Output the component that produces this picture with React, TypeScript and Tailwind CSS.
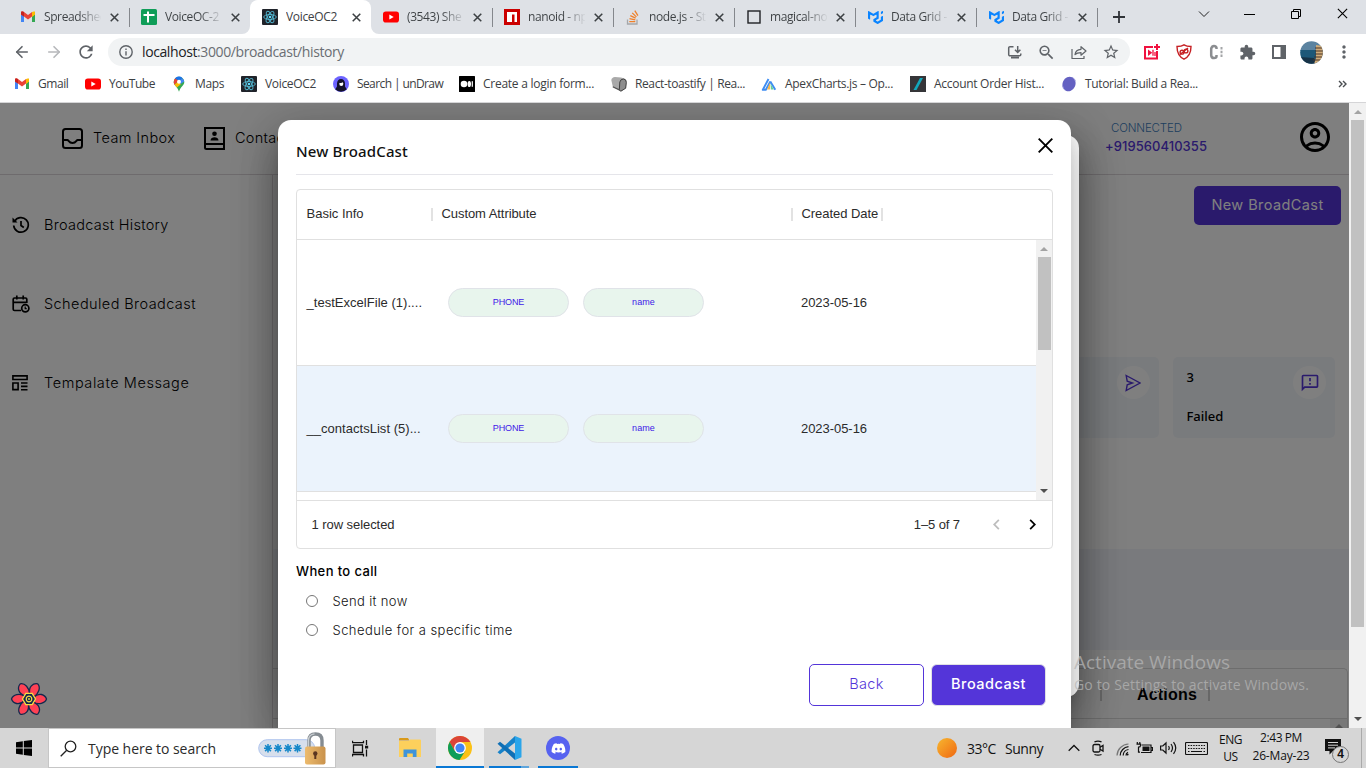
import type { ReactNode } from "react";
import {
  MdOutlineAccountCircle,
  MdOutlineFeedback,
  MdZoomOut,
  MdStarBorder,
  MdExtension,
  MdMoreVert,
  MdKeyboardArrowLeft,
  MdKeyboardArrowRight,
  MdRefresh,
} from "react-icons/md";
import { FaDiscord } from "react-icons/fa";
import { SiMui } from "react-icons/si";
import { ArrowLeft, ArrowRight } from "lucide-react";

/* ---------- brand marks ---------- */

const Gmail = () => (
  <svg width="16" height="16" viewBox="0 0 16 16">
    <path d="M1 3.6V13h3V7z" fill="#4285f4" />
    <path d="M15 3.6V13h-3V7z" fill="#34a853" />
    <path d="M12 3.8l3-1.2v3L12 8z" fill="#fbbc04" />
    <path d="M1 3.6C1 2 2.800 1.900 4 3l4 3.100L12 3v4.600l-4 3-4-3-3-2.200z" fill="#ea4335" />
    <path d="M1 3.600c0-1.300 1.500-1.600 3-.600v4.600L1 5.400z" fill="#c5221f" />
    <path d="M15 3.600c0-1.300-1.500-1.600-3-.600v4.600l3-2.200z" fill="#fbbc04" />
  </svg>
);

const YouTube = () => (
  <svg width="16" height="16" viewBox="0 0 16 16">
    <rect x="0" y="2.500" width="16" height="11" rx="2.800" fill="#f00" />
    <path d="M6.300 5.500v5L10.700 8z" fill="#fff" />
  </svg>
);

const ReactTile = () => (
  <svg width="16" height="16" viewBox="0 0 16 16">
    <rect width="16" height="16" rx="1" fill="#20232a" />
    <g fill="none" stroke="#53b9d3" strokeWidth=".9">
      <ellipse cx="8" cy="8" rx="6.300" ry="2.500" />
      <ellipse cx="8" cy="8" rx="6.300" ry="2.500" transform="rotate(60 8 8)" />
      <ellipse cx="8" cy="8" rx="6.300" ry="2.500" transform="rotate(120 8 8)" />
    </g>
    <circle cx="8" cy="8" r="1.300" fill="#61dafb" />
  </svg>
);

const Sheet = () => (
  <svg width="16" height="16" viewBox="0 0 16 16">
    <rect width="16" height="16" rx="1.500" fill="#0f9d58" />
    <path d="M2.500 6h11M7 2.500v11" stroke="#fff" strokeWidth="2" />
  </svg>
);

const Npm = () => (
  <svg width="16" height="16" viewBox="0 0 16 16">
    <rect width="16" height="16" fill="#cb0000" />
    <path d="M3 3h10v10h-2.500V5.500H8V13H3z" fill="#fff" />
  </svg>
);

const Square = () => (
  <svg width="16" height="16" viewBox="0 0 16 16">
    <rect x="2" y="2" width="12" height="12" fill="none" stroke="#202124" strokeWidth="1.400" />
  </svg>
);

const Stack = () => (
  <svg width="16" height="16" viewBox="0 0 16 16" fill="none">
    <path d="M2.500 10.500V15h9.500v-4.500" stroke="#a5a7aa" strokeWidth="1.300" />
    <path d="M4.300 12.700h6M4.500 9.700l5.800 1.200M5.300 6.700l5.300 2.500M7.200 3.900l4.200 4M9.800 1.700l3.100 5" stroke="#f08029" strokeWidth="1.300" />
  </svg>
);

const MapsPin = () => (
  <svg width="16" height="16" viewBox="0 0 16 16">
    <path d="M2.700 6a5.300 5.300 0 0 1 10.600 0c0 3.500-3.800 4.500-5.300 9.700C6.500 10.500 2.700 9.500 2.700 6z" fill="#34a853" />
    <path d="M2.800 6.500C2.800 4.500 3.500 3 4.500 2l3 2.500-4 4.500z" fill="#ea4335" />
    <path d="M3.500 8.800L7 5.500l3 2.500-4 3.600z" fill="#fbbc04" />
    <path d="M4 2.500C6 0 9.500 0 11.300 2L8.500 5z" fill="#1a73e8" />
    <path d="M11.200 1.900q1.800 1.500 2 3.600L9.500 8 8.500 5z" fill="#4285f4" />
    <circle cx="8" cy="5.800" r="2" fill="#fff" />
  </svg>
);

const UnDraw = () => (
  <svg width="16" height="16" viewBox="0 0 16 16">
    <circle cx="8" cy="8" r="8" fill="#6c63ff" />
    <path d="M4 7.500a4 4.500 0 0 1 8 0v3l1.800 2.700a8 8 0 0 1-11.600 0L4 10.500z" fill="#14122b" />
    <ellipse cx="8.300" cy="7.800" rx="2" ry="2.200" fill="#fff" />
    <path d="M5.500 6.500Q8 8 10.500 5.800L9 4.500H6.500z" fill="#14122b" />
  </svg>
);

const Medium = () => (
  <svg width="16" height="16" viewBox="0 0 16 16">
    <rect width="16" height="16" rx=".5" fill="#000" />
    <circle cx="5" cy="8" r="3.300" fill="#fff" />
    <ellipse cx="10.300" cy="8" rx="1.700" ry="3.100" fill="#fff" />
    <rect x="12.700" y="5.200" width="1.200" height="5.600" fill="#fff" />
  </svg>
);

const Toast = () => (
  <svg width="16" height="16" viewBox="0 0 16 16">
    <path d="M.3 4Q.8 1.300 4 1l6 .4 3.500 1.200q2 1 2 3.500l-.6 6-4.500 3.200L2 11.500z" fill="#a9a9a9" />
    <path d="M8.800 6Q9.500 3 12.500 3q3 .3 2.800 3.500l-.6 5.700-4.800 3-1.600-1z" fill="#8d8d8d" stroke="#383838" strokeWidth=".9" />
    <path d="M1.800 10.800l7 3.300" stroke="#555" strokeWidth="1.200" />
  </svg>
);

const Apex = () => (
  <svg width="16" height="16" viewBox="0 0 16 16">
    <path d="M7.500 3L1.800 13.800h3L9.300 5.500M9.300 5.500l5 8.300" fill="none" stroke="#3f8df2" strokeWidth="1.900" strokeLinejoin="round" />
    <path d="M9 6.500l-3 7h3.200z" fill="#f8b84e" />
    <path d="M9.500 7.500l3.300 6H10z" fill="#64cf9b" />
  </svg>
);

const Account = () => (
  <svg width="16" height="16" viewBox="0 0 16 16">
    <rect width="16" height="16" fill="#353538" />
    <path d="M10 2h3L6.500 14h-3z" fill="#12a8bc" />
  </svg>
);

const Tutorial = () => (
  <svg width="16" height="16" viewBox="0 0 16 16">
    <ellipse cx="8" cy="8" rx="6.400" ry="7.400" transform="rotate(25 8 8)" fill="#6461c2" />
    <path d="M1.500 9.500q.5 4 3 5M11 1.200q3 1.500 3.500 4" fill="none" stroke="#9b99dd" strokeWidth=".9" />
  </svg>
);

const Mui = () => <SiMui size={15} color="#0a84ff" />;

/* ---------- browser ---------- */

type Tab = { icon: ReactNode; text: string; active?: boolean; sep?: boolean };
const tabs: Tab[] = [
  { icon: <Gmail />, text: "Spreadshee", sep: true },
  { icon: <Sheet />, text: "VoiceOC-2" },
  { icon: <ReactTile />, text: "VoiceOC2", active: true },
  { icon: <YouTube />, text: "(3543) She", sep: true },
  { icon: <Npm />, text: "nanoid - np", sep: true },
  { icon: <Stack />, text: "node.js - St", sep: true },
  { icon: <Square />, text: "magical-no", sep: true },
  { icon: <Mui />, text: "Data Grid -", sep: true },
  { icon: <Mui />, text: "Data Grid -", sep: true },
];

const Cross = ({ size = 9, w = 1.7 }: { size?: number; w?: number }) => (
  <svg width={size} height={size} viewBox="0 0 10 10" fill="none" stroke="currentColor" strokeWidth={w}>
    <path d="M.8.800l8.400 8.400M9.200.800L.8 9.200" />
  </svg>
);

const TabStrip = () => (
  <div className="flex h-[34px] shrink-0 bg-[#dee1e6] pl-2 text-[#3c4043]">
    {tabs.map((t, i) => (
      <div
        key={i}
        className={
          t.active
            ? "relative flex h-[34px] w-[121px] shrink-0 items-center rounded-t-lg bg-white pl-[12px]"
            : "relative flex h-[34px] w-[121px] shrink-0 items-center pl-[12px]"
        }
      >
        {t.active && (
          <>
            <svg className="absolute bottom-0 -left-2" width="8" height="8" viewBox="0 0 8 8">
              <path d="M8 0v8H0a8 8 0 0 0 8-8z" fill="#fff" />
            </svg>
            <svg className="absolute -right-2 bottom-0" width="8" height="8" viewBox="0 0 8 8">
              <path d="M0 0v8h8a8 8 0 0 1-8-8z" fill="#fff" />
            </svg>
          </>
        )}
        <span className="flex w-4 justify-center">{t.icon}</span>
        <span
          className={
            t.active
              ? "ml-2 w-[57px] overflow-hidden text-[12px] tracking-[-0.33px] whitespace-nowrap"
              : "ml-2 w-[57px] overflow-hidden bg-linear-to-r from-[#3c4043] from-60% to-[#3c4043]/5 bg-clip-text text-[12px] tracking-[-0.4px] whitespace-nowrap text-transparent"
          }
        >
          {t.text}
        </span>
        <span className="ml-[8.500px]">
          <Cross />
        </span>
        {t.sep && <span className="absolute top-[8px] right-[-1px] h-[19px] w-px bg-[#84878c]" />}
      </div>
    ))}
    <svg className="mt-[11px] ml-[16px]" width="12" height="12" viewBox="0 0 12 12">
      <path d="M6 0v12M0 6h12" stroke="#303338" strokeWidth="1.800" />
    </svg>
    <div className="mt-[8px] mr-[18px] ml-auto flex gap-[35px] text-black">
      <svg width="12" height="12" viewBox="0 0 12 12" fill="none" stroke="#222" className="mr-[-1px] ml-[1px]">
        <path d="M1 3.500l5 5 5-5" />
      </svg>
      <svg width="11" height="12" viewBox="0 0 11 12">
        <path d="M0 6.500h11" stroke="#000" />
      </svg>
      <svg width="12" height="12" viewBox="0 0 12 12" fill="none" stroke="#000">
        <path d="M3.500 3V1.500h7v7H9M1.500 3.500h7v7h-7z" />
      </svg>
      <Cross size={11} w={1} />
    </div>
  </div>
);

const Toolbar = () => (
  <div className="flex h-[36px] shrink-0 items-center bg-white pl-[13px] text-[#5f6368]">
    <ArrowLeft size={18} strokeWidth={2.2} />
    <ArrowRight size={18} strokeWidth={2.2} className="ml-[14px] text-[#b6b8bb]" />
    <MdRefresh size={20} className="ml-[13px]" />
    <div className="ml-[12px] flex h-[28px] w-[1022px] items-center rounded-full bg-[#f1f3f4] pl-[11px]">
      <svg width="14" height="14" viewBox="0 0 14 14" fill="none" stroke="#5f6368" strokeWidth="1.400">
        <circle cx="7" cy="7" r="6.200" />
        <path d="M7 6.200v4.300M7 3.600v1.500" />
      </svg>
      <span className="ml-[9px] pb-[2px] text-[14px] tracking-[-0.4px] whitespace-nowrap text-[#6a6e73]">
        <span className="text-[#202124]">localhost</span>:3000/broadcast/history
      </span>
      <div className="mr-[10px] ml-auto flex items-center gap-[15px]">
        <svg width="16" height="16" viewBox="0 0 16 16" fill="none" stroke="#5f6368" strokeWidth="1.500" className="mr-[-1px]">
          <path d="M6.500 2.700H3a1.300 1.300 0 0 0-1.300 1.300v6.500A1.300 1.300 0 0 0 3 11.800h9.500a1.300 1.300 0 0 0 1.300-1.300V9.500M10.700 2v6M8 5.700l2.700 2.700 2.700-2.700" />
          <path d="M4 13.500h8" strokeWidth="2" />
        </svg>
        <MdZoomOut size={19} />
        <svg width="16" height="16" viewBox="0 0 16 16" fill="none" stroke="#5f6368" strokeWidth="1.200">
          <path d="M1 5v9.500h12V12M4 10.500c.500-3.500 2.500-5 6-5.200V2.700l5 4.300-5 4.200V8.600C7 8.600 5.500 9 4 10.500z" strokeLinejoin="round" />
        </svg>
        <MdStarBorder size={18} />
      </div>
    </div>
    <svg className="ml-[13px]" width="18" height="18" viewBox="0 0 18 18" fill="none" stroke="#f0123f" strokeWidth="2">
      <path d="M10 4H2v11.500h12V8M14 1v6M11 4h6" />
      <path d="M5 6.500v6.500L9.300 9.700z" fill="#f0123f" stroke="none" />
      <path d="M10 6.800v6M12 9v4" strokeWidth="1.300" />
    </svg>
    <svg className="ml-[15px]" width="16" height="16" viewBox="0 0 16 16" fill="none" stroke="#c62024" strokeWidth="1.400">
      <path d="M8 .8c2.500 1.700 4.500 1.700 7 1.700 0 5.500-1.500 10-7 12.700C2.500 12.500 1 8 1 2.500c2.500 0 4.500 0 7-1.700z" />
      <circle cx="6" cy="8.200" r="1.900" />
      <circle cx="10" cy="7" r="1.900" />
      <path d="M4 10.500L12 4" />
    </svg>
    <svg className="ml-[17px]" width="15" height="16" viewBox="0 0 15 16" fill="none" stroke="#8b8d90" strokeWidth="2.500">
      <path d="M7.500 5V3.800Q7 2 5 2T2.200 4.500v7Q2.500 14 5 14t2.500-1.800V11" />
      <path d="M12.500 3v2.500M12.500 6.800v2.400M12.500 10.500V13" stroke="#a3a5a7" strokeWidth="2" />
    </svg>
    <MdExtension size={17} className="ml-[15px]" />
    <svg className="ml-[16px]" width="14" height="14" viewBox="0 0 14 14">
      <path d="M0 0h14v14H0zM2 2v10h6.500V2z" fill="#5f6368" fillRule="evenodd" />
    </svg>
    <svg className="ml-[14px]" width="23" height="23" viewBox="0 0 23 23">
      <defs>
        <clipPath id="avatar">
          <circle cx="11.500" cy="11.500" r="11.300" />
        </clipPath>
      </defs>
      <g clipPath="url(#avatar)">
        <path d="M0 0h23v10H0z" fill="#5b83a0" />
        <path d="M0 9h23v14H0z" fill="#1d5878" />
        <path d="M0 16l14 1 3 6H0z" fill="#173347" />
        <path d="M16 4l7 1v16l-9 2 2-6z" fill="#d1ac79" />
        <path d="M15 7h8M15 10h8M15 13h8M14 16h8M13 19h8" stroke="#4a3529" strokeWidth="1.100" />
      </g>
    </svg>
    <MdMoreVert size={20} className="ml-[11px]" />
  </div>
);

const Bookmark = ({ icon, className, children }: { icon: ReactNode; className: string; children: ReactNode }) => (
  <div className={"flex shrink-0 items-center gap-2 text-[12px] whitespace-nowrap " + className}>
    {icon}
    <span>{children}</span>
  </div>
);

const Bookmarks = () => (
  <div className="flex h-[32px] shrink-0 items-center bg-white pb-[4px] pl-[14px] text-[#3c4043]">
    <Bookmark icon={<Gmail />} className="w-[71px] tracking-[-0.45px]">Gmail</Bookmark>
    <Bookmark icon={<YouTube />} className="w-[86px] tracking-[-0.48px]">YouTube</Bookmark>
    <Bookmark icon={<MapsPin />} className="w-[70px] tracking-[-0.38px]">Maps</Bookmark>
    <Bookmark icon={<ReactTile />} className="w-[92px] tracking-[-0.33px]">VoiceOC2</Bookmark>
    <Bookmark icon={<UnDraw />} className="w-[126px] tracking-[-0.6px]">Search | unDraw</Bookmark>
    <Bookmark icon={<Medium />} className="w-[152px] tracking-[-0.26px]">Create a login form...</Bookmark>
    <Bookmark icon={<Toast />} className="w-[150px] tracking-[-0.39px]">React-toastify | Rea...</Bookmark>
    <Bookmark icon={<Apex />} className="w-[149px] tracking-[-0.32px]">ApexCharts.js – Op...</Bookmark>
    <Bookmark icon={<Account />} className="w-[151px] tracking-[-0.29px]">Account Order Hist...</Bookmark>
    <Bookmark icon={<Tutorial />} className="w-[140px] tracking-[-0.34px]">Tutorial: Build a Rea...</Bookmark>
    <svg className="mr-[19px] ml-auto" width="9" height="8" viewBox="0 0 9 8" fill="none" stroke="#4a4d51" strokeWidth="1.400">
      <path d="M1 1l3 3-3 3M5 1l3 3-3 3" />
    </svg>
  </div>
);

/* ---------- app page ---------- */

const InboxIcon = () => (
  <svg width="21" height="21" viewBox="0 0 21 21" fill="none" stroke="#000" strokeWidth="2">
    <rect x="1" y="1" width="19" height="19" rx="2.500" />
    <path d="M1 12h4.500c1 0 1.500 3 5 3s4-3 5-3H20" />
  </svg>
);

const ContactsIcon = () => (
  <svg width="21" height="23" viewBox="0 0 21 23">
    <path d="M1 1h19v21H2.500A1.500 1.500 0 0 1 1 20.500zM1 17h19" fill="none" stroke="#000" strokeWidth="2" />
    <circle cx="10.500" cy="6.800" r="2.300" fill="#000" />
    <path d="M6.500 13.500c0-4.300 8-4.300 8 0z" fill="#000" />
  </svg>
);

const HistoryIcon = () => (
  <svg width="18" height="18" viewBox="0 0 18 18" fill="none" stroke="#000" strokeWidth="1.700">
    <path d="M2.500 5.500A7.300 7.300 0 1 1 1.700 9.500M9 5v4.500l2.800 2" />
    <path d="M.5 1.500v5h5z" fill="#000" stroke="none" />
  </svg>
);

const ScheduleIcon = () => (
  <svg width="18" height="18" viewBox="0 0 18 18" fill="none" stroke="#000" strokeWidth="1.700">
    <path d="M9 15.500H2.500A1.300 1.300 0 0 1 1.200 14.200V4.300A1.300 1.300 0 0 1 2.500 3h11a1.300 1.300 0 0 1 1.300 1.300V8M1 7.300h13.500M4.800.5v4M11.200.5v4" />
    <circle cx="13.300" cy="13.300" r="3.600" />
    <path d="M13.200 11.500v2.200h1.500" strokeWidth="1.200" />
  </svg>
);

const TemplateIcon = () => (
  <svg width="16" height="16" viewBox="0 0 16 16" fill="none" stroke="#000" strokeWidth="1.600">
    <path d="M.9.900h14.200v3.600H.9zM.9 8h5.200v6.600H.9zM9 8h6.500M9 11.400h6.500M9 14.700h6.500" />
  </svg>
);

const SideItem = ({ icon, children }: { icon: ReactNode; children: ReactNode }) => (
  <div className="flex h-[79px] items-center text-[14.500px] font-[350] whitespace-nowrap">
    <span className="flex w-[32px]">{icon}</span>
    {children}
  </div>
);

const ScrollArrow = ({ down, color }: { down?: boolean; color: string }) => (
  <svg width="8" height="4" viewBox="0 0 8 4" className="shrink-0">
    <path d={down ? "M0 0h8L4 4z" : "M0 4h8L4 0z"} fill={color} />
  </svg>
);

const StatCard = ({ value, label, icon }: { value?: string; label?: string; icon: ReactNode }) => (
  <div className="flex h-[81px] w-[162px] justify-between rounded-[5px] bg-[#f3f7fb] pt-[9px] pr-[9px] pl-[13.500px] font-['Noto_Sans'] text-[13px] font-medium">
    <div className="flex flex-col gap-[21px] pt-[2px] leading-[18px]">
      <span>{value}</span>
      <span>{label}</span>
    </div>
    <span className="flex size-[33px] items-center justify-center rounded-full bg-white text-[#5435d9]">{icon}</span>
  </div>
);

const AppPage = () => (
  <div className="flex h-[625px] w-[1349px] flex-col bg-white font-['Inter'] text-black">
    <header className="flex h-[72px] shrink-0 items-center border-b border-[#dcd6da] pr-[16px] pl-[62px] text-[14.500px] font-[350]">
      <InboxIcon />
      <span className="ml-[10px] w-[111px] pb-[2px] tracking-[0.4px] whitespace-nowrap">Team Inbox</span>
      <ContactsIcon />
      <span className="ml-[10px] pb-[2px] tracking-[0.3px]">Contacts</span>
      <div className="mr-[90px] mb-[4px] ml-auto flex flex-col items-start text-[#5435d9]">
        <span className="pl-[6px] text-[11.500px] leading-[18px] tracking-[-0.15px] text-[#3d7dbd]">CONNECTED</span>
        <span className="text-[13px] leading-[18px] font-medium tracking-[0.06px]">+919560410355</span>
      </div>
      <MdOutlineAccountCircle size={36} className="mb-[3px]" />
    </header>
    <div className="flex min-h-0 flex-1">
      <nav className="flex w-[273px] shrink-0 flex-col border-r border-[#dcd6da] pt-[10px] pl-[12px]">
        <SideItem icon={<HistoryIcon />}>
          <span className="tracking-[0.28px]">Broadcast History</span>
        </SideItem>
        <SideItem icon={<ScheduleIcon />}>
          <span className="tracking-[0.42px]">Scheduled Broadcast</span>
        </SideItem>
        <SideItem icon={<TemplateIcon />}>
          <span className="tracking-[0.58px]">Tempalate Message</span>
        </SideItem>
      </nav>
      <main className="flex min-w-0 flex-1 flex-col pt-[11px]">
        <button className="mr-[8px] flex h-[39px] w-[147px] shrink-0 items-center justify-center self-end rounded-[5px] bg-[#5435d9] pb-[2px] text-[14.500px] tracking-[0.42px] text-white">
          New BroadCast
        </button>
        <div className="mt-[132px] flex shrink-0 justify-end gap-[14px] pr-[14px]">
          <StatCard
            icon={
              <svg width="16" height="18" viewBox="0 0 16 18" fill="none" stroke="currentColor" strokeWidth="1.400" className="ml-[-2px]">
                <path d="M1.200 1.500L15 9 1.200 16.500l1-5.700L7.500 9 2.200 7.200z" />
              </svg>
            }
          />
          <StatCard value="3" label="Failed" icon={<MdOutlineFeedback size={20} />} />
        </div>
        <div className="mt-[111px] h-[101px] shrink-0 bg-[#f3f5fa]" />
        <div className="mt-[18px] mr-px flex min-h-0 flex-1 flex-col rounded-tr-[5px] border-t border-r border-[#dadada]">
          <div className="flex h-[50px] shrink-0 items-center justify-end border-b border-[#dadada] pr-[137px] font-['Liberation_Sans'] text-[16px] font-bold">
            <span className="h-[14px] w-[2px] bg-[#cfcfcf]" />
            <span className="mt-[2px] mr-[11px] ml-[35px] tracking-[0.19px]">Actions</span>
            <span className="h-[14px] w-[2px] bg-[#cfcfcf]" />
          </div>
          <div className="flex h-[9px] w-[17px] items-end justify-center self-end bg-[#f1f1f1]">
            <ScrollArrow color="#a3a3a3" />
          </div>
        </div>
      </main>
    </div>
  </div>
);

/* ---------- dialog ---------- */

const Pill = ({ children }: { children: ReactNode }) => (
  <span className="flex h-[29px] w-[121px] items-center justify-center rounded-full border border-[#e0e3e8] bg-[#e8f5ed] text-[9px] text-[#4018e8]">
    {children}
  </span>
);

const Row = ({ name, selected }: { name: string; selected?: boolean }) => (
  <div
    className={
      selected
        ? "flex h-[126px] shrink-0 items-center border-b border-[#e0e0e0] bg-[#ebf3fc]"
        : "flex h-[126px] shrink-0 items-center border-b border-[#e0e0e0]"
    }
  >
    <span className="w-[151px] pl-[9.500px] tracking-[0.03px] whitespace-nowrap">{name}</span>
    <div className="flex w-[353px] gap-[14px]">
      <Pill>
        <span className="tracking-[-0.15px]">PHONE</span>
      </Pill>
      <Pill>
        <span className="tracking-[0.12px]">name</span>
      </Pill>
    </div>
    <span className="tracking-[-0.05px]">2023-05-16</span>
  </div>
);

const Sep = () => <span className="mt-[2px] h-[13px] w-[2px] bg-[#e2e2e2]" />;

const DataGrid = () => (
  <div className="mt-[14px] flex h-[360px] shrink-0 flex-col rounded-[4px] border border-[#e0e0e0] font-['Liberation_Sans'] text-[13px] text-[#2b2b2b]">
    <div className="flex h-[50px] shrink-0 items-center border-b border-[#e0e0e0] pb-[2px] pl-[9.500px] whitespace-nowrap">
      <span className="w-[124px]">Basic Info</span>
      <Sep />
      <span className="ml-[9px] w-[349px] tracking-[-0.07px]">Custom Attribute</span>
      <Sep />
      <span className="ml-[9px] w-[79px] tracking-[-0.06px]">Created Date</span>
      <Sep />
    </div>
    <div className="flex h-[260px] shrink-0">
      <div className="flex w-[739px] flex-col overflow-hidden">
        <Row name="_testExcelFile (1)...." />
        <Row name="__contactsList (5)..." selected />
      </div>
      <div className="flex flex-1 flex-col items-center bg-[#f1f1f1]">
        <div className="flex h-[17px] items-center">
          <ScrollArrow color="#a3a3a3" />
        </div>
        <div className="h-[93px] w-[13px] bg-[#c1c1c1]" />
        <div className="mt-auto flex h-[18px] items-center">
          <ScrollArrow down color="#505050" />
        </div>
      </div>
    </div>
    <div className="flex flex-1 items-center border-t border-[#e0e0e0] pl-[14.500px]">
      <span className="tracking-[-0.06px]">1 row selected</span>
      <span className="ml-auto tracking-[-0.1px]">1–5 of 7</span>
      <MdKeyboardArrowLeft size={21} className="ml-[26px] text-[#bdbdbd]" />
      <MdKeyboardArrowRight size={21} className="mr-[9px] ml-[15px] text-black" />
    </div>
  </div>
);

const Radio = ({ children }: { children: ReactNode }) => (
  <label className="flex h-[29px] items-center pl-[10px] text-[13px] font-[350] text-[#111]">
    <span className="mr-[14.500px] mb-[2px] size-[12px] rounded-full border border-[#767676] bg-white" />
    {children}
  </label>
);

const shadow =
  "shadow-[0_11px_15px_-7px_rgba(0,0,0,0.2),0_24px_38px_3px_rgba(0,0,0,0.14),0_9px_46px_8px_rgba(0,0,0,0.12)]";

const BroadcastDialog = () => (
  <section
    className={
      "absolute top-[17px] left-[278px] flex h-[640px] w-[793px] flex-col rounded-t-[13px] bg-white px-[18px] font-['Inter'] " + shadow
    }
  >
    <div className="flex h-[55px] shrink-0 justify-between border-b border-[#e5e5ea]">
      <h2 className="pt-[20px] font-['Noto_Sans'] text-[15px] leading-[22px] font-medium tracking-[0.15px] text-[#111]">New BroadCast</h2>
      <svg className="mt-[18px]" width="15" height="15" viewBox="0 0 15 15" fill="none" stroke="#000" strokeWidth="1.900">
        <path d="M.7.700l13.600 13.600M14.300.700L.7 14.300" />
      </svg>
    </div>
    <DataGrid />
    <div className="mt-[12px] h-[20px] text-[13px] leading-[20px] font-medium tracking-[0.38px]">When to call</div>
    <div className="mt-[6px] flex flex-col">
      <Radio>
        <span className="tracking-[0.36px]">Send it now</span>
      </Radio>
      <Radio>
        <span className="tracking-[0.44px]">Schedule for a specific time</span>
      </Radio>
    </div>
    <div className="mt-[19px] mr-[7px] flex justify-end gap-[7px] text-[14.500px]">
      <button className="h-[42px] w-[115px] rounded-[5px] border border-[#5435d9] pb-[3px] font-[350] tracking-[0.3px] text-[#5435d9]">Back</button>
      <button className="h-[42px] w-[115px] rounded-[6px] border border-[#e0e0e4] bg-[#5435d9] pb-[3px] font-medium tracking-[0.48px] text-white">
        Broadcast
      </button>
    </div>
  </section>
);

const QueryFlower = () => (
  <svg className="absolute top-[577px] left-[10px]" width="38" height="38" viewBox="-19 -19 38 38">
    {[30, 90, 150, 210, 270, 330].map((a) => (
      <path
        key={a}
        d="M-1.500-4.500C-7-10-4.500-16 0-17.500c4.500 1.500 6 8 3 13.500z"
        transform={`rotate(${a})`}
        fill="#ff4154"
        stroke="#13294d"
        strokeWidth="1.300"
        strokeLinejoin="round"
      />
    ))}
    <path d="M-3.200-5.700h6.400L6.500 0 3.200 5.700h-6.400L-6.500 0z" fill="#13294d" stroke="#f5dd45" strokeWidth="1.300" />
    <circle r="2.800" fill="none" stroke="#f5dd45" strokeWidth="1.200" />
    <circle r=".9" fill="#f5dd45" />
  </svg>
);

/* ---------- taskbar ---------- */

const ChromeLogo = () => (
  <svg width="24" height="24" viewBox="0 0 24 24">
    <circle cx="12" cy="12" r="12" fill="#fbc116" />
    <path d="M12 6h10.400A12 12 0 0 0 1.600 6l5.200 9z" fill="#db4437" />
    <path d="M1.600 6a12 12 0 0 0 9.900 18l5.700-9-10.400 0z" fill="#0f9d58" />
    <circle cx="12" cy="12" r="5.900" fill="#fff" />
    <circle cx="12" cy="12" r="4.600" fill="#4285f4" />
  </svg>
);

const CodeLogo = () => (
  <svg width="25" height="24" viewBox="0 0 25 24">
    <path d="M18 0l6.500 2.700v18.600L18 24z" fill="#2aa5ea" />
    <path d="M18 0v6.500L3 18.300.5 16.200z" fill="#1782c9" />
    <path d="M18 24v-6.500L3 5.700.5 7.800z" fill="#0f6fb5" />
  </svg>
);

const AppButton = ({ active, className, line, children }: { active?: boolean; className: string; line?: ReactNode; children: ReactNode }) => (
  <div className={"flex h-[40px] shrink-0 flex-col items-center " + (active ? "bg-[#efefef] " : "") + className}>
    <span className="flex flex-1 items-center pt-[2px]">{children}</span>
    {line ?? <span className="h-[2px]" />}
  </div>
);

const Taskbar = () => (
  <footer className="flex h-[40px] shrink-0 items-center bg-[#d6d6d6] text-[14px] text-[#111]">
    <span className="flex w-[48px] justify-center">
      <svg width="16" height="16" viewBox="0 0 16 16">
        <path d="M0 2.200L6.800 1.300V7.500H0zM7.800 1.100L16 0v7.500H7.800zM0 8.500h6.800v6.200L0 13.800zM7.800 8.500H16V16l-8.200-1.100z" />
      </svg>
    </span>
    <div className="flex h-[40px] w-[288px] items-center border border-[#c6c6c6] bg-white pl-[11px]">
      <svg width="17" height="17" viewBox="0 0 17 17" fill="none" stroke="#222" strokeWidth="1.300">
        <circle cx="10.500" cy="6.500" r="5.300" />
        <path d="M6.700 10.300L.7 16.300" />
      </svg>
      <span className="ml-[11px] w-[170px] tracking-[-0.04px] text-[#2b2b2b]">Type here to search</span>
      <svg width="69" height="36" viewBox="0 0 69 36">
        <defs>
          <linearGradient id="lock" x1="0" x2="1">
            <stop offset="0" stopColor="#edbb6d" />
            <stop offset="1" stopColor="#c9924c" />
          </linearGradient>
        </defs>
        <rect x=".7" y="9.700" width="56" height="17" rx="8.500" fill="#d7dfec" stroke="#afc4ee" />
        <g stroke="#1688c9" strokeWidth="1.500">
          {[10, 20, 30, 39.5].map((x) => (
            <path key={x} d={`M${x} 14v8.500M${x - 4} 18.200h8M${x - 2.9} 15.300l5.800 5.800M${x + 2.9} 15.300l-5.800 5.800`} />
          ))}
        </g>
        <path d="M51 18V10.500q0-6.500 6.500-6.500T64 10.500V18" fill="none" stroke="#858c92" strokeWidth="3.400" />
        <path d="M50.500 17V10.500q0-6 6-6.700" fill="none" stroke="#c9ced2" strokeWidth="1.300" />
        <rect x="47" y="16.500" width="20.500" height="18" rx="2" fill="url(#lock)" />
        <circle cx="57.300" cy="23.500" r="2.200" fill="#5b3520" />
        <path d="M56.300 24h2v5h-2z" fill="#5b3520" />
      </svg>
    </div>
    <AppButton className="w-[48px]">
      <svg width="17" height="17" viewBox="0 0 17 17" fill="none" stroke="#111" strokeWidth="1.300">
        <path d="M.5.700v2h11V.700M1.500 5h9v7.500h-9zM.5 16.500v-2h11v2M14.500 0v5M14.500 9.500v7" />
        <path d="M13 5.700h3.200v2.800H13z" fill="#111" stroke="none" />
      </svg>
    </AppButton>
    <AppButton className="w-[52px]">
      <svg width="22" height="20" viewBox="0 0 22 20">
        <path d="M0 1q0-1 1-1h8l1.500 2.500H0z" fill="#d99a1a" />
        <path d="M0 3h10l1-1.500h10q1 0 1 1V19H0z" fill="#fdd05c" />
        <path d="M4.500 19v-7.500h13V19h-3.700v-3.500H8.200V19z" fill="#3f94da" />
      </svg>
    </AppButton>
    <AppButton active className="w-[48px]" line={<span className="h-[2px] w-full bg-[#0a78d4]" />}>
      <ChromeLogo />
    </AppButton>
    <AppButton
      className="w-[50px]"
      line={
        <span className="flex h-[2px] w-[40px]">
          <span className="w-[32px] bg-[#0a78d4]" />
          <span className="w-[8px] bg-[#5fa5dc]" />
        </span>
      }
    >
      <CodeLogo />
    </AppButton>
    <AppButton className="w-[48px]" line={<span className="h-[2px] w-[40px] bg-[#0a78d4]" />}>
      <span className="flex size-6 items-center justify-center rounded-full bg-[#5662f0] text-white">
        <FaDiscord size={15} />
      </span>
    </AppButton>

    <span className="ml-auto size-[20px] shrink-0 rounded-full bg-linear-to-br from-[#f6b62f] to-[#ee6510]" />
    <span className="ml-[10px] w-[38px] shrink-0 tracking-[-0.46px]">33°C</span>
    <span className="w-[63px] shrink-0 tracking-[-0.49px]">Sunny</span>
    <svg className="shrink-0" width="12" height="8" viewBox="0 0 12 8" fill="none" stroke="#111" strokeWidth="1.300">
      <path d="M.7 6.800L6 1.500l5.300 5.300" />
    </svg>
    <svg className="ml-[12px] shrink-0" width="12" height="16" viewBox="0 0 12 16" fill="none" stroke="#111" strokeWidth="1.300">
      <rect x="1" y="4.500" width="7" height="7.500" rx="1.500" />
      <path d="M8 7.300l3-1.800v5.500l-3-1.800M2.500 1.800q3.500-1.500 7 0M2.500 14.500q3.500 1.300 7 0" />
    </svg>
    <svg className="mt-[2px] ml-[12px] shrink-0" width="13" height="13" viewBox="0 0 13 13" fill="none" stroke="#111" strokeWidth="1.200">
      <path d="M10 12.500a3.500 3.500 0 0 1 2-3.300M7.200 12.500A6 6 0 0 1 12.500 6.500M4.200 12.500A9 9 0 0 1 12.500 3.700" />
      <path d="M1 12.500A12 12 0 0 1 12.500 1" stroke="#777" />
      <circle cx="11.500" cy="11.500" r="1.100" fill="#111" stroke="none" />
    </svg>
    <svg className="ml-[7px] shrink-0" width="17" height="12" viewBox="0 0 17 12" fill="none" stroke="#111" strokeWidth="1.200">
      <path d="M5.500 3h9.500v7.500H5M15.500 5.500h1v3h-1M1.300 0v2M3.800 0v2M.5 2.200h4v1.500q0 1.300-2 1.500v5H4" />
      <path d="M6.500 4.500h7v4.500h-7z" fill="#111" stroke="none" />
    </svg>
    <svg className="ml-[7px] shrink-0" width="17" height="14" viewBox="0 0 17 14" fill="none" stroke="#111" strokeWidth="1.200">
      <path d="M.6 5v4h2.200l3.200 3V2L2.800 5zM8.500 5q1.500 2 0 4M11 3q3 4 0 8M13.500 1.200q4.500 5.800 0 11.600" />
    </svg>
    <svg className="ml-[8px] shrink-0" width="23" height="13" viewBox="0 0 23 13" fill="none" stroke="#111" strokeWidth="1.100">
      <rect x=".5" y=".5" width="22" height="12" rx="1" />
      <path d="M3 3.500h17M3 6.500h17" strokeDasharray="1.500 1.100" />
      <path d="M3 9.500h1.500M6 9.500h11M18.500 9.500H20" />
    </svg>
    <div className="ml-[11px] flex w-[23px] shrink-0 flex-col items-center text-[12px] leading-[17px] tracking-[-0.48px]">
      <span>ENG</span>
      <span>US</span>
    </div>
    <div className="mb-[2px] ml-[9px] flex w-[60px] shrink-0 flex-col items-center text-[12px] leading-[18px] whitespace-nowrap">
      <span className="tracking-[-0.41px]">2:43 PM</span>
      <span className="tracking-[-0.18px]">26-May-23</span>
    </div>
    <div className="relative mt-[3px] ml-[14px] h-[26px] w-[24px] shrink-0">
      <svg width="17" height="17" viewBox="0 0 17 17" className="absolute top-[1px] left-0">
        <path d="M0 1h16v12H8l-3.500 3.500V13H0z" fill="#111" />
        <path d="M3 4.500h10M3 7.200h10M3 9.900h7" stroke="#d6d6d6" />
      </svg>
      <span className="absolute top-[9px] left-[7px] flex size-[17px] items-center justify-center rounded-full border border-[#777] bg-[#d6d6d6] font-['Liberation_Sans'] text-[12px] font-bold">
        4
      </span>
    </div>
    <span className="mr-[4px] ml-[12px] h-[40px] w-px shrink-0 bg-[#aaa]" />
  </footer>
);

export default function App() {
  return (
    <div className="flex h-[768px] w-[1366px] flex-col overflow-hidden bg-white font-['Open_Sans',sans-serif]">
      <TabStrip />
      <Toolbar />
      <Bookmarks />
      <div className="h-px shrink-0 bg-[#d5d5d7]" />
      <div className="relative flex h-[625px] shrink-0 overflow-hidden">
        <AppPage />
        <div className="absolute top-0 left-0 h-[625px] w-[1349px] overflow-hidden bg-black/50">
          <div className={"absolute top-[32px] left-[286px] h-[562px] w-[793px] rounded-[13px] bg-white " + shadow} />
          <BroadcastDialog />
          <QueryFlower />
          <div className="absolute top-[547px] left-[1074px] flex flex-col whitespace-nowrap text-[#b5b5b5]/75">
            <span className="text-[19px] leading-[24px]">Activate Windows</span>
            <span className="text-[14px] leading-[22px] tracking-[0.16px]">Go to Settings to activate Windows.</span>
          </div>
        </div>
        <div className="z-10 flex w-[17px] shrink-0 flex-col items-center bg-[#f1f1f1]">
          <div className="flex h-[17px] items-center">
            <ScrollArrow color="#a3a3a3" />
          </div>
          <div className="h-[507px] w-[13px] bg-[#c1c1c1]" />
          <div className="mt-auto flex h-[18px] items-center">
            <ScrollArrow down color="#505050" />
          </div>
        </div>
      </div>
      <Taskbar />
    </div>
  );
}
